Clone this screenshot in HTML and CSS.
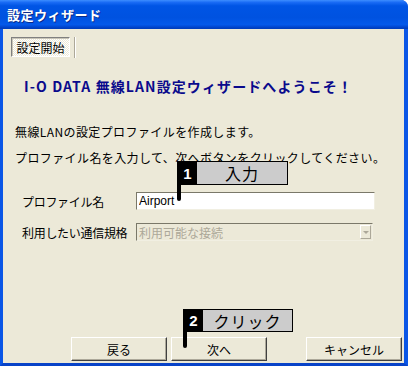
FILE: index.html
```html
<!DOCTYPE html>
<html lang="ja">

<head>
  <meta charset="UTF-8">
  <meta name="viewport" content="width=device-width, initial-scale=1.0">
  <title>設定ウィザード</title>
  <link rel="stylesheet" href="styles.css">
</head>

<body>

  <div class="window">
    <div class="titlebar">
      <span class="title">設定ウィザード</span>
    </div>

    <div class="content">
      <div class="tabbar">
        <span class="tab">設定開始</span>
        <span class="tab-sep"></span>
      </div>

      <h2 class="heading">I-O DATA 無線LAN設定ウィザードへようこそ！</h2>

      <p class="intro">無線LANの設定プロファイルを作成します。<br>プロファイル名を入力して、次へボタンをクリックしてください。</p>

      <div class="form">
        <div class="form-row">
          <label for="profileName">プロファイル名</label>
          <input type="text" id="profileName" class="text-input" value="Airport">
        </div>
        <div class="form-row">
          <label>利用したい通信規格</label>
          <div class="combo">
            <span class="combo-text">利用可能な接続</span>
            <span class="combo-btn"><span class="arrow"></span></span>
          </div>
        </div>
      </div>

      <div class="buttons">
        <button class="btn">戻る</button>
        <button class="btn">次へ</button>
        <button class="btn btn-cancel">キャンセル</button>
      </div>

      <!-- 操作手順の注釈 -->
      <div class="callout callout-1">
        <span class="num">1</span>
        <span class="label">入力</span>
      </div>
      <div class="callout callout-2">
        <span class="num">2</span>
        <span class="label">クリック</span>
      </div>
    </div>
  </div>

</body>

</html>
```

FILE: styles.css
```css
body {
  margin: 0;
  padding: 0;
  background: #fff;
  font-family: "Noto Sans CJK JP", "Liberation Sans", sans-serif;
  font-size: 12px;
  color: #000;
}

.window {
  width: 408px;
  height: 366px;
  display: flex;
  flex-direction: column;
  box-sizing: border-box;
  border-left: 3px solid #0a56e6;
  border-right: 4px solid #0a56e6;
  border-bottom: 3px solid #0843c8;
  border-top-right-radius: 7px;
  background: #0a56e6;
}

.titlebar {
  height: 29px;
  margin: 0 -4px 0 -3px;
  padding-left: 7px;
  display: flex;
  align-items: center;
  border-top-right-radius: 7px;
  background: linear-gradient(to bottom, #3d8eff 0%, #1a6cf5 8%, #0055e5 20%, #0052e0 60%, #0459ea 85%, #0042c8 95%, #003cb8 100%);
}

.title {
  color: #fff;
  font-weight: bold;
  font-size: 13px;
  letter-spacing: 0.5px;
  text-shadow: 1px 1px 0 #0a2a8a;
}

.content {
  position: relative;
  flex: 1;
  display: flex;
  flex-direction: column;
  background: #ece9d8;
}

.tabbar {
  display: flex;
  align-items: center;
  margin-top: 8px;
  padding-left: 8px;
  height: 20px;
}

.tab {
  width: 59px;
  height: 20px;
  box-sizing: border-box;
  display: flex;
  align-items: center;
  justify-content: center;
  border: 1px solid;
  border-color: #808080 #fff #fff #808080;
  box-shadow: inset 1px 1px 0 #c8c5b8;
  background: repeating-conic-gradient(#fff 0 25%, #ece9d8 0 50%) 0 0 / 2px 2px;
}

.tab-sep {
  width: 1px;
  height: 21px;
  margin-left: 4px;
  background: #aca899;
  border-right: 1px solid #fff;
}

.heading {
  margin: 21px 0 0 21px;
  font-size: 14px;
  line-height: 16px;
  font-weight: bold;
  letter-spacing: 1.1px;
  color: #0a0a8c;
}

.intro {
  margin: 25px 0 0 12px;
  line-height: 26px;
  letter-spacing: 0.4px;
}

.form {
  display: flex;
  flex-direction: column;
  gap: 13px;
  margin-top: 21px;
  padding-left: 19px;
}

.form-row {
  display: flex;
  align-items: center;
  height: 18px;
}

.form-row label {
  width: 114px;
  letter-spacing: -0.3px;
}

.text-input {
  width: 239px;
  height: 18px;
  box-sizing: border-box;
  margin: 0;
  padding: 0 2px;
  font-family: "Liberation Sans", sans-serif;
  font-size: 12px;
  border: 1px solid;
  border-color: #7a7869 #f1efe2 #f1efe2 #7a7869;
  background: #fff;
  outline: none;
}

.combo {
  width: 237px;
  height: 18px;
  box-sizing: border-box;
  display: flex;
  align-items: center;
  justify-content: space-between;
  border: 1px solid;
  border-color: #7a7869 #f1efe2 #f1efe2 #7a7869;
  background: #ece9d8;
}

.combo-text {
  padding-left: 2px;
  color: #aca899;
}

.combo-btn {
  width: 11px;
  height: 14px;
  margin-right: 1px;
  box-sizing: border-box;
  display: flex;
  align-items: center;
  justify-content: center;
  border: 1px solid;
  border-color: #fff #aca899 #aca899 #fff;
}

.arrow {
  width: 0;
  height: 0;
  border-left: 3px solid transparent;
  border-right: 3px solid transparent;
  border-top: 3px solid #aca899;
}

.buttons {
  display: flex;
  justify-content: flex-end;
  gap: 4px;
  margin-top: auto;
  margin-bottom: 2px;
  padding-right: 2px;
}

.btn {
  width: 96px;
  height: 24px;
  margin: 0;
  padding: 0;
  font-family: "Noto Sans CJK JP", sans-serif;
  font-size: 12px;
  color: #000;
  background: #ece9d8;
  border: 1px solid;
  border-color: #fff #404040 #404040 #fff;
  box-shadow: inset -1px -1px 0 #aca899;
}

.btn-cancel {
  margin-left: 35px;
}

/* 注釈 */
.callout {
  position: absolute;
  display: flex;
  height: 24px;
  box-sizing: border-box;
  border: 1px solid #000;
}

.callout::after {
  content: "";
  position: absolute;
  left: -1px;
  top: 100%;
  width: 4px;
  height: 17px;
  background: #000;
  border-radius: 0 0 2px 2px;
}

.callout .num {
  width: 19px;
  display: flex;
  align-items: center;
  justify-content: center;
  background: #000;
  color: #fff;
  font-family: "Liberation Sans", sans-serif;
  font-weight: bold;
  font-size: 15px;
}

.callout .label {
  flex: 1;
  display: flex;
  align-items: center;
  justify-content: center;
  background: #cccccc;
  font-size: 16px;
  letter-spacing: 1px;
}

.callout-1 {
  left: 174px;
  top: 132px;
  width: 111px;
}

.callout-2 {
  left: 180px;
  top: 280px;
  width: 110px;
  height: 23px;
}
```
